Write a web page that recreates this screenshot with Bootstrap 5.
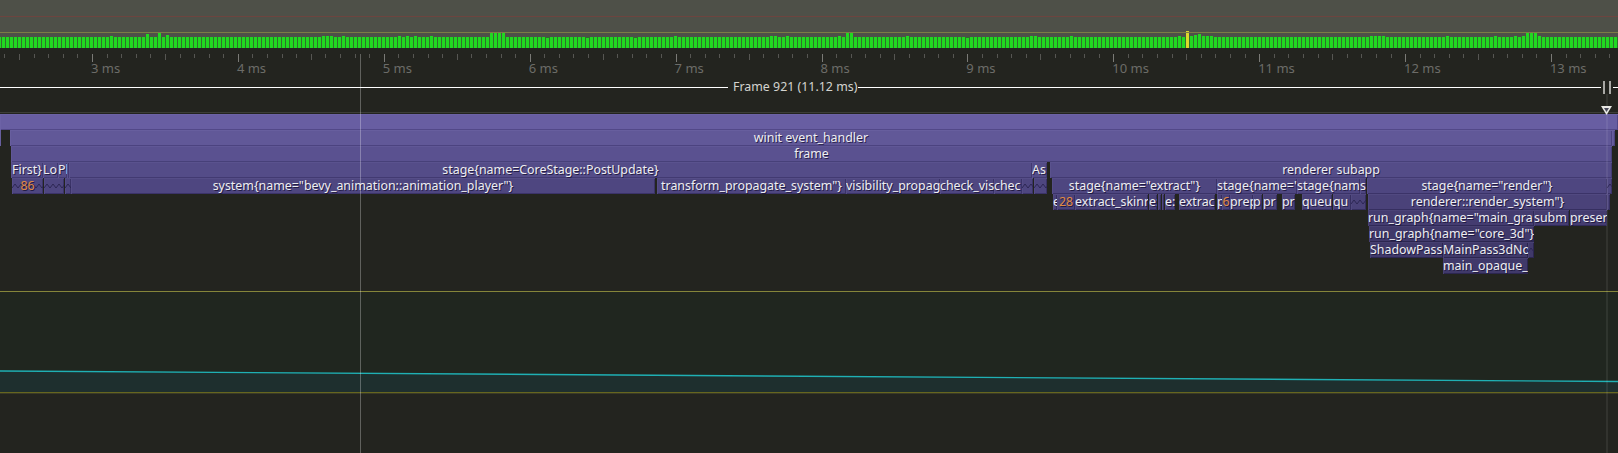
<!DOCTYPE html>
<html lang="en">
<head>
<meta charset="utf-8">
<title>Frame 921</title>
<link href="https://cdn.jsdelivr.net/npm/bootstrap@5.3.0/dist/css/bootstrap.min.css" rel="stylesheet">
<style>
html,body{margin:0;background:#23241f;}
body{width:1618px;height:453px;overflow:hidden;font-family:"Noto Sans","Open Sans",sans-serif;font-size:12.4px;line-height:15px;}
.tp-strip{height:48px;background:#4e5048;}
.tp-strip svg,.tp-ruler svg,.tp-plot svg{display:block;}
.tp-ruler{height:33px;}
.tp-ticks{height:14px;padding-top:6px;}
.tp-labels{height:19px;padding-left:91px;}
.tp-label{flex:0 0 145.9px;color:#6c6c68;font-size:13px;line-height:12px;}
.tp-framebar{height:13px;}
.tp-fline{height:1px;background:#fff;}
.tp-fname{color:#d4d4d0;font-size:12.4px;line-height:13px;padding:0 1px 2px 5px;}
.tp-endmark{flex:0 0 12px;height:13px;}
.tp-endmark i{display:block;width:2px;height:13px;background:#a8a8a4;}
.tp-gapline{height:19px;border-bottom:1px solid #3c3d38;margin-bottom:1px;}
.tp-flame{height:177px;}
.tp-row{height:16px;}
.zn{height:16px;flex:none;overflow-x:clip;overflow-y:visible;white-space:nowrap;text-align:center;color:#eeeef2;text-shadow:1px 1px 0 rgba(20,15,50,.75);position:relative;line-height:15px;background:var(--zf);box-shadow:inset 1px 1px 0 var(--zh),inset -1px -1px 0 var(--zl);}
.zn.lft{text-align:left;}
.zn svg{position:absolute;left:0;top:5px;}
.zn b{position:relative;font-weight:400;}
.zn.cnt b{color:#e08a45;}
.d0{--zf:#685ea2;--zh:#6c62a6;--zl:#524888;}
.d1{--zf:#615898;--zh:#675e9e;--zl:#4c4380;}
.d2{--zf:#5a5190;--zh:#605796;--zl:#474079;}
.d3{--zf:#544c88;--zh:#5a528e;--zl:#423a72;}
.d4{--zf:#4e4680;--zh:#554d87;--zl:#3b3368;}
.d5{--zf:#4a4279;--zh:#514980;--zl:#362f60;}
.d6{--zf:#443c70;--zh:#4b4377;--zl:#302a58;}
.d7,.d8,.d9{--zf:#40396a;--zh:#474071;--zl:#2c2650;}
.tp-plot{height:101px;background:#20261f;border-top:1px solid #85853a;}
.tp-plot svg{height:100px;width:1618px;}
.tp-base{height:61px;border-top:1px solid #66661f;box-shadow:inset 0 1px 0 #3a3a26;}
.tp-cross{left:360px;top:54px;bottom:0;width:1px;background:rgba(255,255,255,.28);}
.tp-endband{left:1606px;top:94px;bottom:0;width:2px;background:rgba(255,255,255,.07);}
.tp-tri{left:1600px;top:105px;}
</style>
</head>
<body class="position-relative">
<header class="tp-strip"><svg id="bars" width="1618" height="48"></svg></header>
<section class="tp-ruler">
  <div class="tp-ticks"><svg id="ticks" width="1618" height="8"></svg></div>
  <div class="tp-labels d-flex">
    <span class="tp-label">3 ms</span><span class="tp-label">4 ms</span><span class="tp-label">5 ms</span><span class="tp-label">6 ms</span><span class="tp-label">7 ms</span><span class="tp-label">8 ms</span><span class="tp-label">9 ms</span><span class="tp-label">10 ms</span><span class="tp-label">11 ms</span><span class="tp-label">12 ms</span><span class="tp-label">13 ms</span>
  </div>
</section>
<section class="tp-framebar d-flex align-items-center">
  <div class="tp-fline flex-grow-0" id="fl"></div>
  <div class="tp-fname text-nowrap">Frame 921 (11.12 ms)</div>
  <div class="tp-fline flex-grow-1"></div>
  <div class="tp-endmark d-flex justify-content-center gap-1 bg-transparent"><i></i><i></i></div>
  <div class="tp-fline" id="fr"></div>
</section>
<div class="tp-gapline"></div>
<main class="tp-flame" id="flame"></main>
<section class="tp-plot"><svg viewBox="0 0 1618 100" id="plot"></svg></section>
<footer class="tp-base"></footer>

<div class="tp-cross position-absolute"></div>
<div class="tp-endband position-absolute"></div>
<svg class="tp-tri position-absolute" width="13" height="11" viewBox="0 0 13 11"><path d="M1 1H12L6.5 10Z" fill="#e8e8e4"/><path d="M4 3H9L6.5 7Z" fill="#4a4a5a"/></svg>

<script>
// Frame-time strip
var tall={110:36,146:34,158:33,166:35,322:36,326:36,330:36,342:36,398:36,406:36,414:36,430:36,490:33,494:33,498:33,502:33,546:38,586:38,634:38,674:36,770:36,774:36,786:36,838:36,846:32,850:33,906:36,966:38,1030:36,1034:36,1070:36,1178:36,1186:31,1190:36,1194:35,1198:34,1202:36,1206:36,1210:36,1370:36,1374:36,1378:36,1382:36,1446:36,1494:36,1514:36,1522:36,1526:33,1530:33,1534:33,1538:36};
var s='<rect y="37" width="1618" height="11" fill="#30702c"/><rect x="0" y="37" width="1" height="11" fill="#21d821"/>';
for(var x=2;x<1618;x+=4){var t=tall[x]||37;s+='<rect x="'+x+'" y="'+t+'" width="3" height="'+(48-t)+'" fill="'+(x==1186?'#dcd82a':'#21d821')+'"/>';}
s+='<rect y="16" width="1618" height="1" fill="#6d443f"/><rect y="32" width="1618" height="1" fill="#7b7b45"/>';
document.getElementById('bars').innerHTML=s;

// Ruler
var s2='';
for(var i=-20;i<=110;i++){var px=Math.round(92+145.9*i/10);if(px<0||px>1618)continue;var m=((i%10)+10)%10;var h=m==0?8:(m==5?6:4);s2+='<rect x="'+px+'" y="0" width="1" height="'+h+'" fill="'+(m==0?'#7a7a76':'#565652')+'"/>';}
document.getElementById('ticks').innerHTML=s2;

// Frame bar spans
document.getElementById('fl').style.width='728px';
document.getElementById('fr').style.width='5px';

// Flame rows: [x0,x1,label,flags] l=left aligned, f=folded squiggle, c=counter label
var rows=[
[[0,1618,'']],
[[0,1,''],[10,1612,'winit event_handler'],[1612,1615,'']],
[[11,1612,'frame']],
[[11,43,'First}'],[43,58,'Lo','l'],[58,67,'Pl','l'],[67,69,''],[69,1032,'stage{name=CoreStage::PostUpdate}'],[1032,1047,'As','l'],[1050,1612,'renderer subapp']],
[[12,43,'86','fc'],[44,64,'','f'],[65,71,'','f'],[71,655,'system{name="bevy_animation::animation_player"}'],[657,846,'transform_propagate_system"}'],[846,940,'visibility_propag','l'],[940,994,'check_vis','l'],[994,1022,'chec','l'],[1022,1033,'','f'],[1034,1047,'','f'],[1052,1217,'stage{name="extract"}'],[1217,1297,"stage{name='",'l'],[1297,1360,'stage{nam','l'],[1360,1366,'s','l'],[1367,1607,'stage{name="render"}'],[1607,1612,'','f']],
[[1053,1057,'e','l'],[1057,1075,'28','c'],[1075,1148,'extract_skinr','l'],[1149,1157,'e:','l'],[1158,1161,''],[1162,1164,''],[1165,1175,'e:','l'],[1179,1215,'extrac','l'],[1217,1222,'p','l'],[1222,1230,'6','c'],[1230,1253,'prep','l'],[1253,1262,'p','l'],[1263,1277,'pr','l'],[1282,1295,'pr','l'],[1302,1332,'queu','l'],[1333,1351,'qu','l'],[1351,1366,'','f'],[1368,1607,'renderer::render_system"}'],[1607,1610,'']],
[[1368,1534,'run_graph{name="main_gra','l'],[1534,1569,'subm','l'],[1570,1607,'preser','l']],
[[1369,1534,'run_graph{name="core_3d"}','l']],
[[1370,1443,'ShadowPass','l'],[1443,1528,'MainPass3dNo','l'],[1528,1534,'','f']],
[[1443,1528,'main_opaque_','l']]
];
var html='';
rows.forEach(function(r,d){
  var pos=0,h='';
  r.forEach(function(z){
    var fl=z[3]||'',w=z[1]-z[0],cls='zn'+(fl.indexOf('l')>=0?' lft':'')+(fl.indexOf('c')>=0?' cnt':'');
    var zig='';
    if(fl.indexOf('f')>=0){var p='';for(var k=0;k<=w+6;k+=3){p+=(k/3%2?k+',1 ':k+',5 ');}zig='<svg width="'+w+'" height="7"><polyline points="'+p+'" fill="none" stroke="#2d2754" stroke-width="1"/></svg>';}
    h+='<div class="'+cls+'" style="width:'+w+'px;margin-left:'+(z[0]-pos)+'px">'+zig+(z[2]?'<b>'+z[2].replace(/"/g,'&quot;')+'</b>':'')+'</div>';
    pos=z[1];
  });
  html+='<div class="tp-row d-flex d'+d+'">'+h+'</div>';
});
document.getElementById('flame').innerHTML=html;

// Plot: value line falling left to right, filled below
document.getElementById('plot').innerHTML='<polygon points="0,79 1618,89.5 1618,100 0,100" fill="#1e2f2e"/><line x1="0" y1="79" x2="1618" y2="89.5" stroke="#1fb0b4" stroke-width="1.4"/>';
</script>
<script src="https://cdn.jsdelivr.net/npm/bootstrap@5.3.0/dist/js/bootstrap.bundle.min.js"></script>
</body>
</html>
